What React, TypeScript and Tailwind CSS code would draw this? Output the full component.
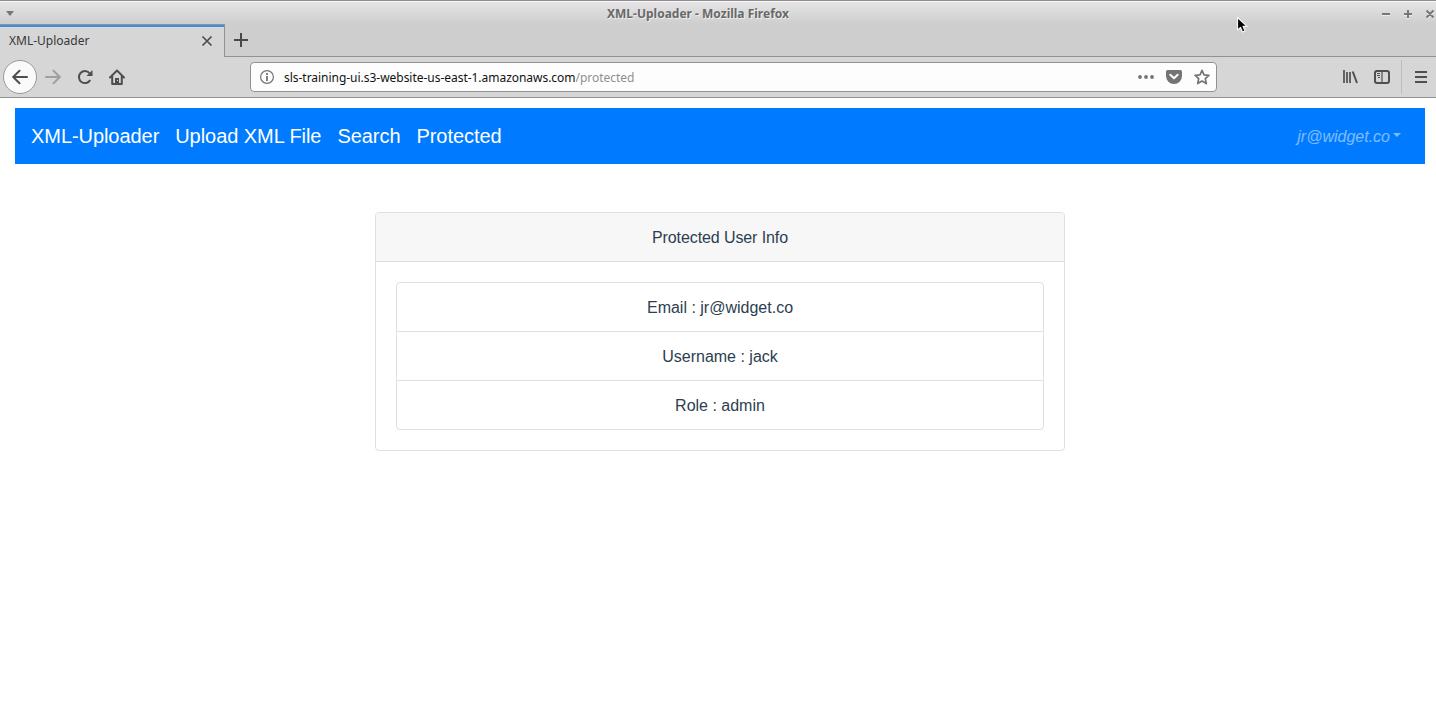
import type { ReactNode } from "react";

function Icon({ size = 16, className = "", children }: { size?: number; className?: string; children: ReactNode }) {
  return (
    <svg
      width={size}
      height={size}
      viewBox={`0 0 ${size} ${size}`}
      fill="none"
      stroke="currentColor"
      strokeWidth="2"
      className={`block shrink-0 ${className}`}
    >
      {children}
    </svg>
  );
}

function TitleBar() {
  return (
    <div className="flex h-6 shrink-0 items-center border-t border-[#8f8b8f] bg-linear-to-b from-[#e6e6e6] to-[#cecece] text-[#777] shadow-[inset_0_1px_0_#f8f8f8]">
      <div className="flex w-[607px] pt-0.5 pl-[6px]">
        <svg width="8" height="5" viewBox="0 0 8 5" className="block">
          <path d="M0 0h8L4 5z" fill="#777" />
        </svg>
      </div>
      <div className="pt-[3px] font-['Noto_Sans',sans-serif] text-[12px] leading-4 font-bold text-[#696969] [text-shadow:1px_1px_0_#eeeeee]">
        XML-Uploader - Mozilla Firefox
      </div>
      <div className="flex flex-1 justify-end pt-[3px]">
        <svg width="56" height="10" viewBox="0 0 56 10" fill="none" strokeWidth="2" className="block">
          <path d="M2 6h8M24 6h8M28 2v8M47 2.500l7 7M54 2.500l-7 7" stroke="#eeeeee" />
          <path d="M2 5h8M24 5h8M28 1v8M46.500 1.500l7 7M53.500 1.500l-7 7" stroke="#777" />
        </svg>
      </div>
    </div>
  );
}

function TabStrip() {
  return (
    <div className="flex h-[33px] shrink-0 bg-[#cecece]">
      <div className="flex w-[225px] items-center justify-between border-t border-r border-[#929292] bg-[#d6d6d6] shadow-[inset_0_2px_0_#3b8ee6]">
        <span className="pl-[9px] font-['Noto_Sans',sans-serif] text-[12px] leading-4 text-[#383838]">XML-Uploader</span>
        <Icon size={12} className="mr-[11px] text-[#494949]">
          <path d="M1.5 1.5l9 9M10.500 1.500l-9 9" strokeWidth="1.6" />
        </Icon>
      </div>
      <div className="flex flex-1 items-center border-b border-[#929292] pl-[8px]">
        <Icon className="text-[#494949]">
          <path d="M8 1v14M1 8h14" />
        </Icon>
      </div>
    </div>
  );
}

function AddressBar() {
  return (
    <div className="flex h-[30px] w-[967px] items-center rounded-[4px] border border-[#929292] bg-[#fdfdfd] pr-[6px] pl-[9px] text-[#747474]">
      <Icon>
        <circle cx="7" cy="8" r="6.400" strokeWidth="1.200" />
        <path d="M7 7v5M7 4v2" strokeWidth="1.800" />
      </Icon>
      <span className="flex-1 pt-0.5 pl-[8px] font-['Noto_Sans',sans-serif] text-[12px] leading-4 tracking-[-0.03px] text-[#111]">
        sls-training-ui.s3-website-us-east-1.amazonaws.com<span className="text-[#8f8f8f]">/protected</span>
      </span>
      <div className="flex items-center gap-[12px]">
        <Icon>
          <g fill="currentColor" stroke="none">
            <circle cx="2" cy="8" r="1.900" />
            <circle cx="8" cy="8" r="1.900" />
            <circle cx="14" cy="8" r="1.900" />
          </g>
        </Icon>
        <Icon>
          <path
            d="M1.700 1h12.600A1.700 1.700 0 0 1 16 2.700V7A8 8 0 0 1 0 7V2.700A1.700 1.700 0 0 1 1.700 1z"
            fill="currentColor"
            stroke="none"
          />
          <path d="M4.300 5.800L8 9.300l3.700-3.500" stroke="#fdfdfd" strokeLinecap="round" strokeLinejoin="round" />
        </Icon>
        <Icon>
          <path
            d="M8 1.400l2 4.500 4.900.5-3.600 3.300 1 4.900L8 12.100l-4.300 2.500 1-4.900L1.100 6.400 6 5.900z"
            strokeWidth="1.700"
            strokeLinejoin="round"
          />
        </Icon>
      </div>
    </div>
  );
}

function Toolbar() {
  return (
    <div className="flex h-[41px] shrink-0 items-center border-b border-[#929292] bg-[#d6d6d6] text-[#4f4f4f]">
      <div className="flex w-[250px] items-center pl-[3px]">
        <div className="flex size-[34px] items-center justify-center rounded-full border border-[#9a9a9a] bg-[#fafafa]">
          <Icon>
            <path d="M15 8H1.500M7.500 1.700L1.200 8l6.300 6.300" strokeLinejoin="round" strokeLinecap="round" />
          </Icon>
        </div>
        <Icon className="ml-2 text-[#a0a0a0]">
          <path d="M1 8h13.500M8.500 1.700L14.800 8l-6.300 6.300" strokeLinejoin="round" strokeLinecap="round" />
        </Icon>
        <Icon className="ml-4">
          <path d="M12.500 4.200A6 6 0 1 0 13.200 11" />
          <path d="M15.500 1v6H9.500z" fill="currentColor" stroke="none" />
        </Icon>
        <Icon className="ml-4">
          <path d="M1 8.500L8 1.500l7 7M3.200 7v8h9.600V7" strokeLinejoin="round" strokeLinecap="round" />
          <path d="M6 9h4v6H6z" fill="currentColor" stroke="none" />
          <path d="M8 11.500h1" stroke="#d6d6d6" strokeWidth="1" />
        </Icon>
      </div>
      <AddressBar />
      <div className="flex flex-1 items-center justify-end">
        <Icon>
          <path d="M2 1v13M5 3v11M8 3v11" strokeWidth="1.700" />
          <path d="M10.700 2.500L15 14" />
        </Icon>
        <Icon className="ml-4">
          <rect x="1" y="2" width="14" height="12" rx="2" />
          <path d="M8 2v12" strokeWidth="1.200" />
          <path d="M3 4.500h3M3 6.500h3M4 8.500h2" strokeWidth="1" />
        </Icon>
        <div className="ml-[11px] h-[34px] w-px bg-[#bdbdbd]" />
        <Icon className="mr-[7px] ml-[11px]">
          <path d="M2 3h12M2 8h12M2 13h12" />
        </Icon>
      </div>
    </div>
  );
}

function NavBar() {
  return (
    <nav className="mt-[10px] mr-[11px] ml-[15px] flex h-14 items-center justify-between bg-[#007bff] px-4 text-white">
      <div className="flex gap-4 text-[20px] leading-[30px] tracking-[-0.06px]">
        <a>XML-Uploader</a>
        <a>Upload XML File</a>
        <a>Search</a>
        <a>Protected</a>
      </div>
      <a className="flex items-center pr-2 text-[16px] leading-6 text-white/50">
        <em className="pt-0.5">jr@widget.co</em>
        <svg width="8" height="4" viewBox="0 0 8 4" className="mb-0.5 ml-[3px] block">
          <path d="M0 0h8L4 4z" fill="currentColor" />
        </svg>
      </a>
    </nav>
  );
}

const userInfo = ["Email : jr@widget.co", "Username : jack", "Role : admin"];

function UserCard() {
  return (
    <section className="mt-12 ml-[375px] w-[690px] rounded-[4px] border border-[#dfdfdf] text-center text-[16px] leading-6 text-[#2c3e50]">
      <header className="rounded-t-[3px] border-b border-[#dfdfdf] bg-[#f7f7f7] pt-[13px] pb-[11px] tracking-[-0.1px]">
        Protected User Info
      </header>
      <div className="p-5">
        <ul className="divide-y divide-[#dfdfdf] rounded-[4px] border border-[#dfdfdf]">
          {userInfo.map((line) => (
            <li key={line} className="pt-[13px] pb-[11px]">
              {line}
            </li>
          ))}
        </ul>
      </div>
    </section>
  );
}

export default function App() {
  return (
    <div className="relative flex h-[719px] w-[1436px] flex-col overflow-hidden bg-white font-['Liberation_Sans',sans-serif]">
      <TitleBar />
      <TabStrip />
      <Toolbar />
      <main className="flex-1">
        <NavBar />
        <UserCard />
      </main>
      <svg width="13" height="18" viewBox="0 0 13 18" className="absolute top-4 left-[1236px]">
        <path
          d="M1.500 1.500v12.600l3-2.700 2 4.600 2.600-1.100-2-4.500h4z"
          fill="#000"
          stroke="#f5f5f5"
          strokeWidth="1.200"
          strokeLinejoin="round"
        />
      </svg>
    </div>
  );
}
